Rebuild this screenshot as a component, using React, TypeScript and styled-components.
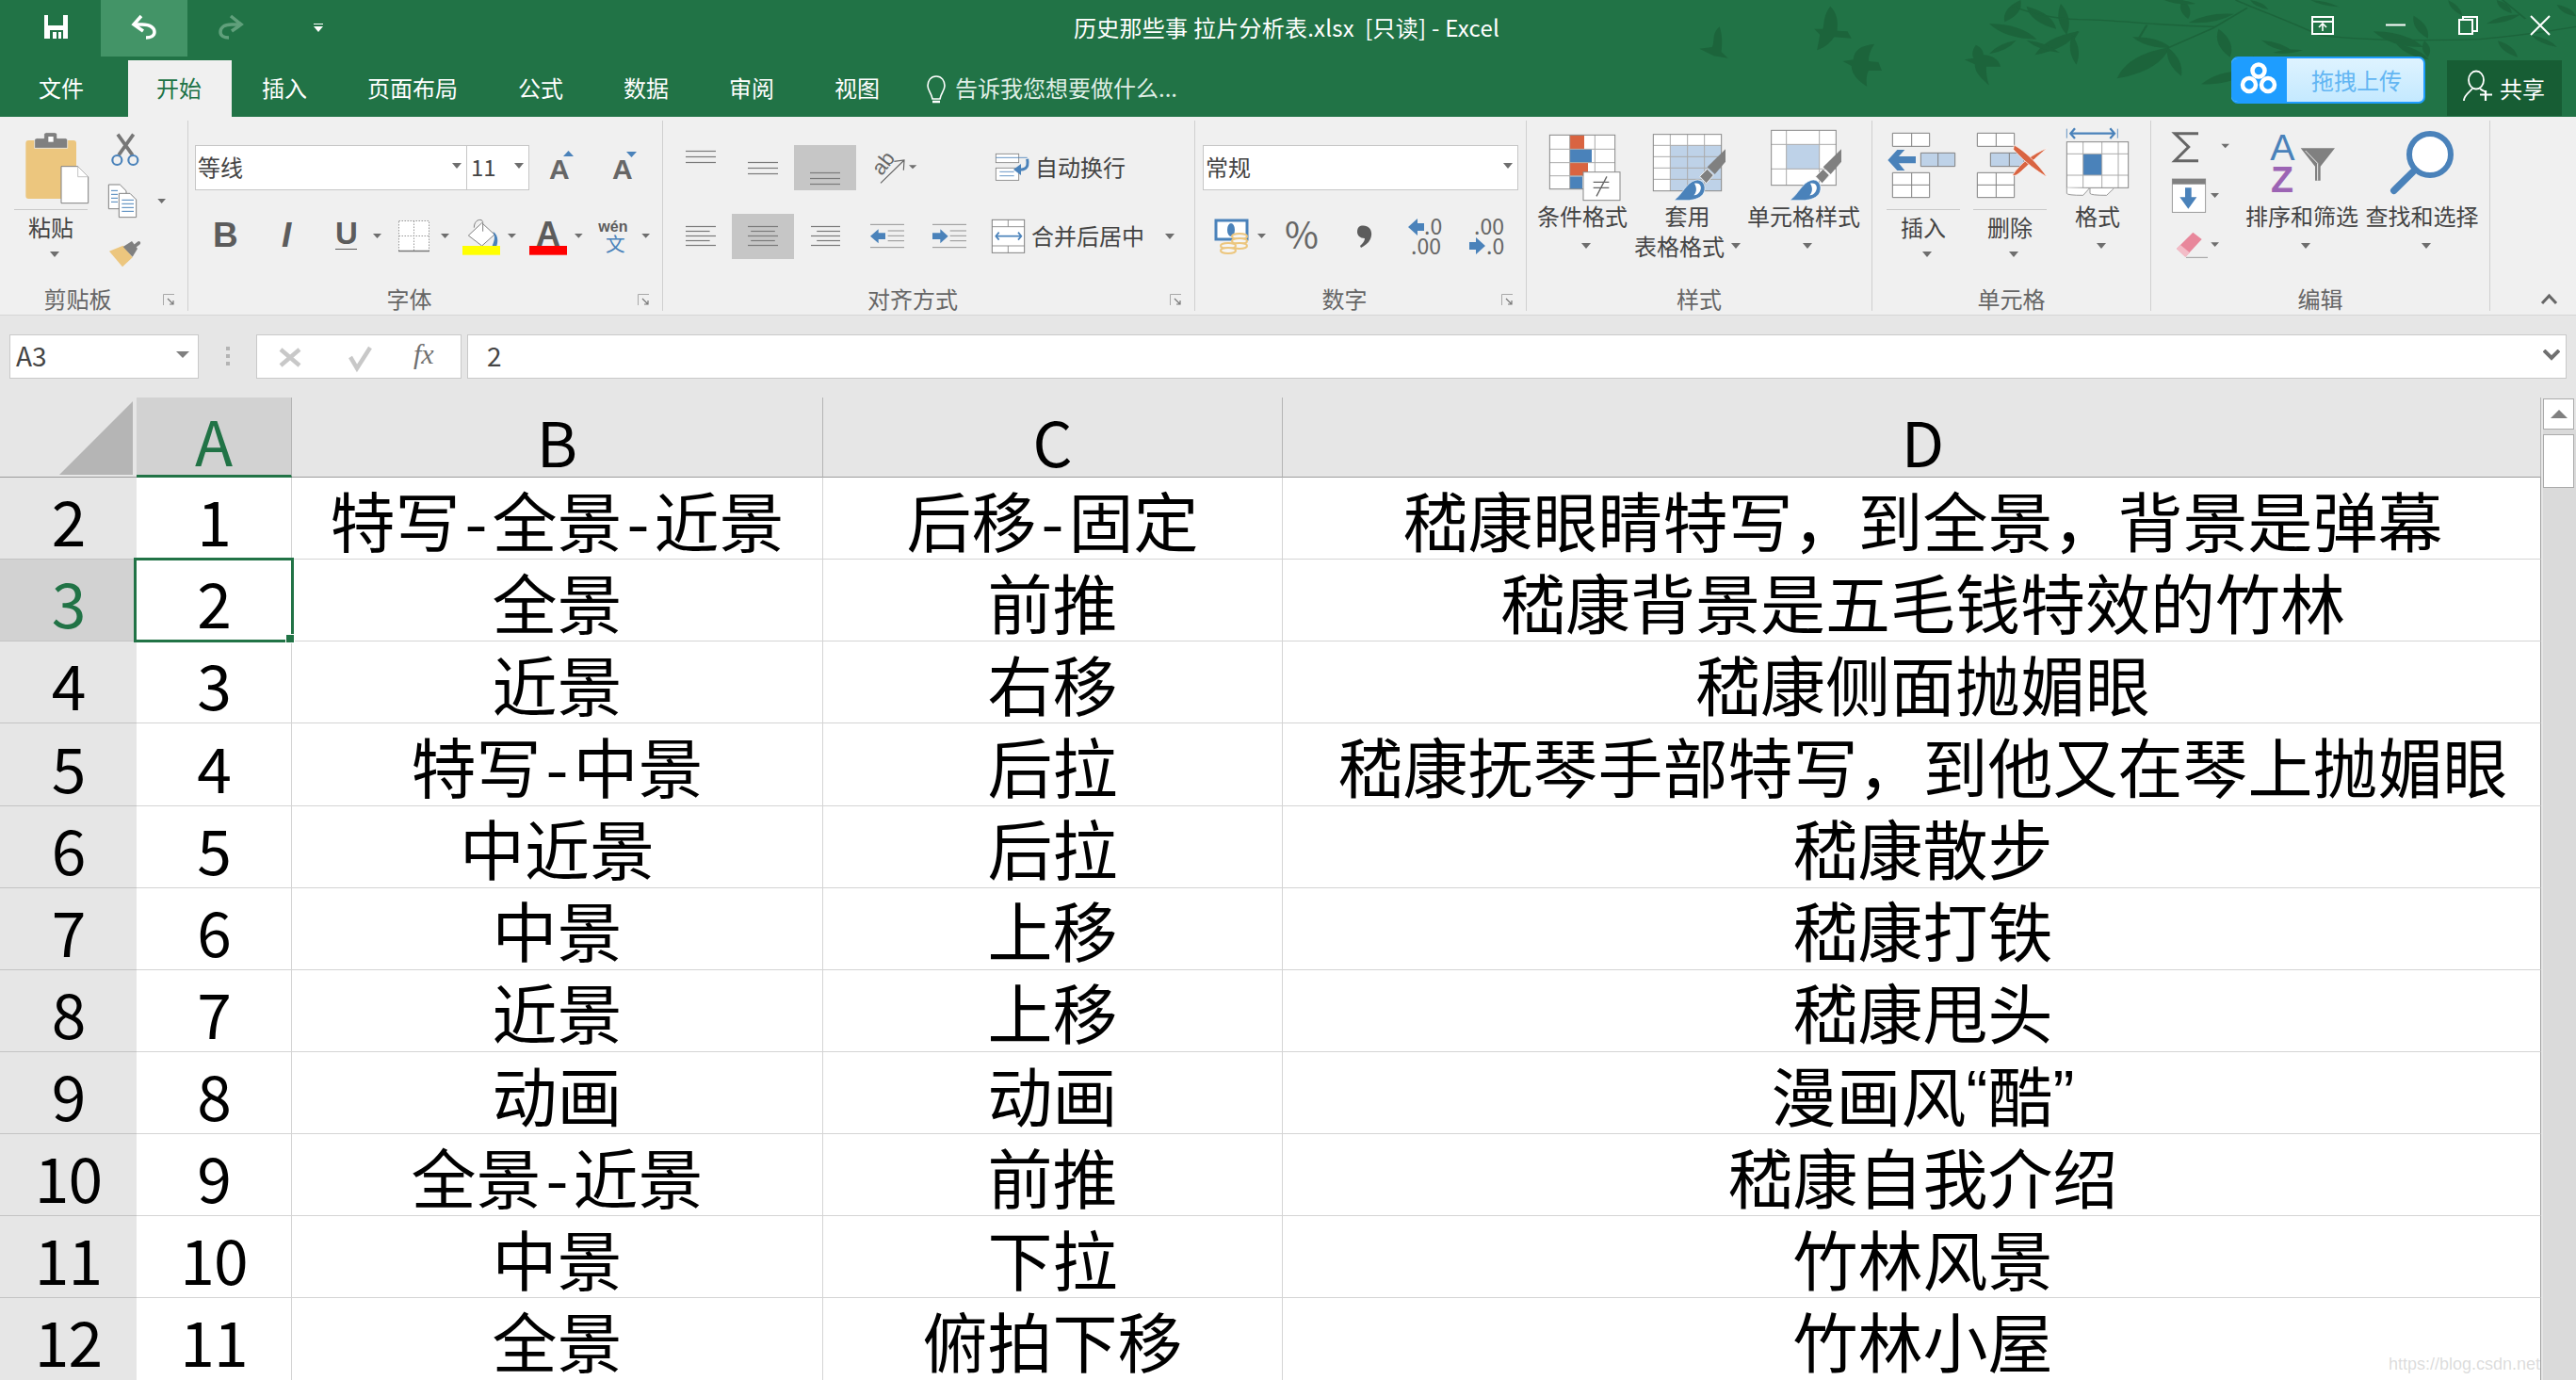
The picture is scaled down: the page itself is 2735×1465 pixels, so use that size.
import React from "react";
import styled, { createGlobalStyle } from "styled-components";

const CJK = `"Noto Sans CJK SC", "Noto Sans", sans-serif`;
const NARROW = `"Liberation Sans Narrow", "Noto Sans CJK SC", sans-serif`;
const SANS = "Liberation Sans";
const GREEN = "#217346";
const BLUE = "#4a82ba";
const TXT = "#666666";
const INNER = "#aaaaaa";
const TAN = "#ecc67e";
const RED = "#d96441";
const PALE = "#bed2e8";

const Global = createGlobalStyle`
  html, body { margin: 0; padding: 0; background: #e6e6e6; }
  * { box-sizing: border-box; }
`;

const Page = styled.div`
  width: 2735px; height: 1465px; overflow: hidden; position: relative;
  display: flex; flex-direction: column;
  font-family: ${CJK}; background: #e6e6e6;
`;
const Header = styled.header`position: relative; height: 124px; background: ${GREEN}; flex: none; display: flex; flex-direction: column;`;
const Decor = styled.svg`position: absolute; left: 1780px; top: 0; pointer-events: none;`;
const TitleBar = styled.div`position: relative; height: 64px; display: flex; flex: none;`;
const Qat = styled.div`display: flex; width: 380px; height: 60px; flex: none;`;
const QatBtn = styled.div<{ $on?: boolean }>`height: 60px; background: ${(p) => (p.$on ? "#439467" : "transparent")};`;
const DocTitle = styled.div`margin-left: 760px; line-height: 58px; font-size: 24px; color: #fff; white-space: pre; letter-spacing: 0.25px;`;
const WinCtl = styled.div`margin-left: auto; display: flex;`;
const TabRow = styled.div`position: relative; height: 60px; display: flex; flex: none; align-items: stretch;`;
const Tab = styled.div<{ $on?: boolean; $first?: boolean }>`
  padding: ${(p) => (p.$first ? "0 47px 0 41px" : p.$on ? "0 32px 0 30px" : "0 32px")};
  line-height: 58px; font-size: 24px; white-space: nowrap;
  color: ${(p) => (p.$on ? GREEN : "#fff")};
  background: ${(p) => (p.$on ? "#f0f0f0" : "transparent")};
`;
const TellMe = styled.div`display: flex; margin-left: 18px; align-items: flex-start; color: #dfeee5; font-size: 24px; line-height: 58px; white-space: nowrap;`;
const Upload = styled.div`
  margin-left: auto; margin-top: -4px; width: 206px; height: 50px; display: flex; flex: none;
  border-radius: 7px; overflow: hidden; border: 2px solid #1e9dff; border-width: 2px 2px 2px 0;
  background: linear-gradient(#def3ff, #c4e9ff);
`;
const UploadIcon = styled.div`width: 59px; background: #1e9dff; flex: none;`;
const UploadText = styled.div`padding-left: 26px; font-size: 24px; color: #63b6f3; line-height: 46px; white-space: nowrap;`;
const Share = styled.div`margin: 0 15px 1px 23px; width: 122px; background: #175d34; display: flex; color: #fff; font-size: 24px; line-height: 60px;`;

const Ribbon = styled.div`height: 211px; flex: none; display: flex; background: #f0f0f0; border-bottom: 1px solid #d6d6d6; padding-top: 4px;`;
const Group = styled.section<{ $w: number }>`
  width: ${(p) => p.$w}px; height: 202px; flex: none; border-right: 1px solid #d0d0d0;
  display: flex; flex-direction: column;
`;
const GroupBody = styled.div`flex: 1; min-height: 0;`;
const GroupLabel = styled.div<{ $launch?: boolean }>`
  position: relative; height: 26px; flex: none; text-align: center; font-size: 24px; line-height: 26px; color: ${TXT};
  padding-right: ${(p) => (p.$launch ? 34 : 0)}px;
`;
const Launcher = styled.span`position: absolute; right: 13px; top: 8px;`;
const Rows = styled.div<{ $pl: number }>`display: flex; flex-direction: column; gap: 25px; padding: 26px 0 0 ${(p) => p.$pl}px;`;
const Row = styled.div`display: flex; height: 48px; align-items: center;`;
const Combo = styled.div<{ $w: number; $joined?: boolean }>`
  width: ${(p) => p.$w}px; height: 48px; flex: none; background: #fff; border: 1.5px solid #c6c6c6;
  margin-left: ${(p) => (p.$joined ? "-1px" : "0")};
  display: flex; align-items: center; justify-content: space-between; padding: 0 5px 4px ${(p) => (p.$joined ? 4 : 2)}px;
  font-size: 24px; color: #444;
`;
const Caret = styled.i<{ $ml?: number }>`
  display: inline-block; flex: none; width: 0; height: 0; margin-left: ${(p) => p.$ml ?? 0}px;
  border-left: 5px solid transparent; border-right: 5px solid transparent; border-top: 6px solid #6e6e6e;
`;
const Pressed = styled.div`background: #c6c6c6; height: 48px;`;
const InlineText = styled.span`font-size: 24px; color: #444; white-space: nowrap; line-height: 48px; padding-bottom: 2px;`;
const BigRow = styled.div<{ $pl: number; $gap: number }>`display: flex; padding: 7px 0 0 ${(p) => p.$pl}px; gap: ${(p) => p.$gap}px;`;
const BigBtn = styled.div<{ $w: number }>`width: ${(p) => p.$w}px; flex: none; display: flex; flex-direction: column; align-items: center;`;
const BigLabel = styled.div`height: 32px; line-height: 32px; font-size: 24px; color: #444; white-space: nowrap; display: flex; align-items: center;`;
const SplitRule = styled.div`width: 100%; height: 1px; background: #c9c9c9; margin: 9px 0 2px;`;
const CaretLine = styled.div<{ $h: number }>`height: ${(p) => p.$h}px; padding-left: 8px; display: flex; align-items: center; justify-content: center;`;
const ToolColumn = styled.div<{ $w: number }>`width: ${(p) => p.$w}px; flex: none; display: flex; flex-direction: column;`;

const FormulaBand = styled.div`height: 87px; flex: none; display: flex; padding: 20px 0 20px 10px; background: #e6e6e6;`;
const NameBox = styled.div`width: 201px; height: 47px; background: #fff; border: 1.5px solid #c9c9c9; display: flex; align-items: center; justify-content: space-between; padding: 0 9px 4px 6px; font: 28px ${NARROW}; color: #444;`;
const NameCaret = styled.i`width: 0; height: 0; border-left: 7px solid transparent; border-right: 7px solid transparent; border-top: 7px solid #808080;`;
const FxBox = styled.div`width: 218px; height: 47px; background: #fff; border: 1.5px solid #c9c9c9; flex: none;`;
const FormulaInput = styled.div`width: 2229px; height: 47px; margin-left: 6px; background: #fff; border: 1.5px solid #c9c9c9; display: flex; align-items: center; justify-content: space-between; padding: 0 6px 4px 20px; font: 28px ${NARROW}; color: #444;`;

const SheetWrap = styled.div`flex: 1; min-height: 0; display: flex; position: relative;`;
const Sheet = styled.div`
  width: 2698px; flex: none; display: grid; align-content: start;
  grid-template-columns: 145px 165px 564px 488px 1336px;
  grid-template-rows: 85px;
  grid-auto-rows: 87.15px;
  font-family: ${NARROW}; font-size: 69px; color: #000;
`;
const Corner = styled.div`background: #e6e6e6; border-bottom: 1.5px solid #9c9c9c; display: flex; justify-content: flex-end; padding: 4px 4px 0 0;`;
const ColHead = styled.div<{ $on?: boolean; $wide?: boolean }>`
  display: flex; align-items: center; justify-content: center; padding: 6px 0 0 ${(p) => (p.$wide ? 24 : 0)}px;
  font-size: 66px;
  background: ${(p) => (p.$on ? "#d2d2d2" : "#e6e6e6")};
  color: ${(p) => (p.$on ? GREEN : "#000")};
  border-right: 1px solid #b4b4b4;
  border-bottom: ${(p) => (p.$on ? `3px solid ${GREEN}` : "1.5px solid #9c9c9c")};
`;
const RowHead = styled.div<{ $on?: boolean }>`
  display: flex; align-items: center; justify-content: center; padding-top: 2px; font-size: 66px; letter-spacing: -1px;
  background: ${(p) => (p.$on ? "#d2d2d2" : "#e6e6e6")};
  color: ${(p) => (p.$on ? GREEN : "#000")};
  border-bottom: 1px solid #c4c4c4;
`;
const Cell = styled.div<{ $end?: boolean; $num?: boolean }>`
  position: relative; background: #fff; display: flex; align-items: center; justify-content: center;
  padding: ${(p) => (p.$num ? "2px 0 0 0" : p.$end ? "1px 0 0 24px" : "1px 0 0 0")};
  font-size: ${(p) => (p.$num ? 66 : 69)}px;
  letter-spacing: ${(p) => (p.$num ? -1 : 0)}px;
  white-space: pre;
  border-right: 1px solid ${(p) => (p.$end ? "#a0a0a0" : "#d4d4d4")};
  border-bottom: 1px solid #d4d4d4;
`;
const Dash = styled.span`padding: 0 5px;`;
const Quote = styled.span`font-family: "Liberation Sans Narrow", sans-serif;`;
const Selection = styled.span`position: absolute; left: -3px; top: -2px; right: -3px; bottom: -2px; border: 3px solid ${GREEN}; pointer-events: none; z-index: 2;`;
const Handle = styled.span`position: absolute; right: -3px; bottom: -3px; width: 8px; height: 8px; background: ${GREEN}; outline: 1px solid #fff;`;
const ScrollBar = styled.div`flex: 1; display: flex; flex-direction: column; padding: 1px 0 0 2px;`;
const ScrollBtn = styled.div`width: 33px; height: 33px; background: #fff; border: 1px solid #ababab; display: flex; align-items: center; justify-content: center; flex: none;`;
const Track = styled.div`flex: 1; background: #dadada; padding-top: 5px;`;
const Thumb = styled.div`width: 33px; height: 57px; background: #fff; border: 1px solid #ababab;`;
const Watermark = styled.div`position: absolute; right: 38px; bottom: 6px; font: 18px "Liberation Sans", sans-serif; color: rgba(170,170,170,.42); z-index: 3;`;
const PlainSvg = styled.svg`display: block; flex: none;`;

const Glyph = styled.svg`display: block; flex: none; overflow: visible;`;
const Ico = ({ x, y, w, h, children }: { x: number; y: number; w: number; h: number; children?: React.ReactNode }) => (
  <Glyph width={w} height={h} viewBox={`${x} ${y} ${w} ${h}`}>{children}</Glyph>
);
const Z = ({ x, y, children }: { x: number; y: number; children: React.ReactNode }) => (
  <g transform={`translate(${x} ${y}) scale(${1 / 3})`}>{children}</g>
);
const Tri = ({ x, y }: { x: number; y: number }) => (
  <polygon points={`${x},${y} ${x + 9},${y} ${x + 4.5},${y + 5}`} fill="#6e6e6e" />
);
const Launch = () => (
  <Launcher>
    <PlainSvg width="13" height="13" viewBox="0 0 13 13">
      <path d="M.5 12V.5H12" fill="none" stroke="#a8a8a8" />
      <path d="M5 5l6 6M11 7v4H7" fill="none" stroke="#777" strokeWidth="1.2" />
    </PlainSvg>
  </Launcher>
);

const Brush = ({ dx = 0 }: { dx?: number }) => (
  <g transform={`translate(${dx} 0)`}>
    <polygon points="606,85 606,125 572,165 548,142" fill="#808080" />
    <polygon points="548,148 568,168 545,194 524,172" fill="#808080" stroke="#f0f0f0" strokeWidth="3" />
    <path d="M442 248C470 228 480 192 510 184C532 178 546 200 538 222C530 242 505 246 490 248Z" fill={BLUE} stroke="#fff" strokeWidth="2" />
    <path d="M507 194C522 190 532 202 526 216C521 228 512 232 505 232C516 220 514 206 507 194Z" fill="#fff" />
  </g>
);
const DoubleArrow = ({ x1, x2, y, s = 3 }: { x1: number; x2: number; y: number; s?: number }) => (
  <g stroke={BLUE} strokeWidth={s * 1.7} fill="none">
    <path d={`M${x1 + 3} ${y}H${x2 - 3}`} />
    <path d={`M${x1 + 4 * s} ${y - 4 * s}L${x1 + 2} ${y}L${x1 + 4 * s} ${y + 4 * s}M${x2 - 4 * s} ${y - 4 * s}L${x2 - 2} ${y}L${x2 - 4 * s} ${y + 4 * s}`} />
  </g>
);
const Lines = ({ x1, x2, ys, short }: { x1: number; x2: number; ys: number[]; short?: "l" | "c" | "r" }) => (
  <g stroke="#7a7a7a" strokeWidth="1.2">
    {ys.map((y, i) => {
      const odd = short && i % 2 === 1;
      const d = x2 - x1;
      const a = odd ? (short === "r" ? x1 + d * 0.2 : short === "c" ? x1 + d * 0.1 : x1) : x1;
      const b = odd ? (short === "l" ? x1 + d * 0.8 : short === "c" ? x2 - d * 0.1 : x2) : x2;
      return <line key={y} x1={a} x2={b} y1={y + 0.5} y2={y + 0.5} />;
    })}
  </g>
);

const leaves: number[][] = [
  [600, 0, 572, 70, 26], [610, 20, 662, 92, 30], [670, 12, 680, 110, 22], [545, 75, 628, 125, 34], [592, 128, 545, 172, 18], [700, 100, 625, 175, 34], [610, 128, 668, 168, 18],
  [690, 112, 697, 206, 18], [795, 118, 862, 152, 28], [860, 150, 768, 250, 48], [856, 150, 880, 242, 22], [893, 72, 972, 44, 26], [945, 92, 965, 182, 26], [882, 0, 892, 60, 20], [850, 0, 905, 12, 16],
  [1000, 0, 1032, 30, 14], [1215, 100, 1302, 150, 36], [1285, 50, 1310, 122, 22], [1255, 140, 1312, 190, 22], [1304, 130, 1310, 182, 16], [1020, 128, 1076, 166, 20], [1040, 168, 1092, 160, 14],
  [1432, 130, 1466, 182, 20], [1412, 76, 1472, 46, 20], [1535, 15, 1568, 52, 18], [1430, 0, 1456, 42, 18], [915, 268, 1000, 225, 34], [1005, 178, 1020, 232, 14], [1105, 0, 1155, 22, 12], [1345, 0, 1370, 50, 14], [1490, 112, 1535, 150, 16],
];
const leafPath = ([a, b, c, d, w]: number[]) => {
  const mx = (a + c) / 2, my = (b + d) / 2, l = Math.hypot(c - a, d - b) || 1;
  const nx = (-(d - b) / l) * (w / 2), ny = ((c - a) / l) * (w / 2);
  return `M${a} ${b}Q${mx + nx * 1.6} ${my + ny * 1.6} ${c} ${d}Q${mx - nx * 1.6} ${my - ny * 1.6} ${a} ${b}Z`;
};

const rows: [number, string, string, string][] = [
  [1, "特写-全景-近景", "后移-固定", "嵇康眼睛特写，到全景，背景是弹幕"],
  [2, "全景", "前推", "嵇康背景是五毛钱特效的竹林"],
  [3, "近景", "右移", "嵇康侧面抛媚眼"],
  [4, "特写-中景", "后拉", "嵇康抚琴手部特写，到他又在琴上抛媚眼"],
  [5, "中近景", "后拉", "嵇康散步"],
  [6, "中景", "上移", "嵇康打铁"],
  [7, "近景", "上移", "嵇康甩头"],
  [8, "动画", "动画", "漫画风“酷”"],
  [9, "全景-近景", "前推", "嵇康自我介绍"],
  [10, "中景", "下拉", "竹林风景"],
  [11, "全景", "俯拍下移", "竹林小屋"],
];

const Rich = ({ text }: { text: string }) => (
  <>
    {text.split(/([-“”])/).map((part, i) =>
      part === "-" ? <Dash key={i}>-</Dash> : part === "“" || part === "”" ? <Quote key={i}>{part}</Quote> : part
    )}
  </>
);

export default function App() {
  return (
    <Page>
      <Global />
      <Header>
        <Decor width="955" height="124" viewBox="0 0 955 124">
          <g transform="scale(0.609 0.3333)" fill="#1c643b">
            <path d="M75 85C60 110 68 130 62 150L40 155L65 178L90 185L78 165C80 140 80 110 75 85Z" />
            <path d="M268 20C255 50 258 80 255 92L240 92L250 110L245 160C262 150 270 130 275 118L305 122L298 100L280 98C282 70 280 40 268 20Z" />
            <path d="M345 140C320 145 310 160 308 190L290 195L305 210C305 240 320 262 332 275C330 250 332 235 335 225L358 225L352 198L335 195C335 170 340 155 345 140Z" />
            <path d="M522 143C515 160 515 175 518 185L502 190L520 205C520 235 535 255 545 272C540 245 540 225 540 212L565 212C562 190 550 175 535 175C535 160 530 150 522 143Z" />
            {leaves.map((l) => <path key={l.join()} d={leafPath(l)} />)}
            <g fill="none" stroke="#1c643b" strokeWidth="4">
              <path d="M585 18C610 40 660 60 700 62C760 62 860 85 940 85" />
              <path d="M975 0C1010 30 1060 60 1120 112C1200 130 1300 130 1400 125C1460 115 1520 100 1568 85" />
              <path d="M995 25L935 90L860 150M820 80L805 125M700 100L690 130M1440 0L1480 60" />
            </g>
          </g>
        </Decor>
        <TitleBar>
          <Qat>
            <QatBtn>
              <Ico x={0} y={0} w={107} h={60}>
                <path d="M47 16H72V41H47Z" fill="#fff" />
                <path d="M51 16H67V27H51Z" fill={GREEN} />
                <path d="M53 32H67V41H53Z" fill={GREEN} />
                <path d="M56 34H60V41H56ZM62 34H65V41H62Z" fill="#fff" />
              </Ico>
            </QatBtn>
            <QatBtn $on>
              <Ico x={107} y={0} w={92} h={60}>
                <path d="M150 17L142 26L152 33" fill="none" stroke="#fff" strokeWidth="3.5" />
                <path d="M143 26H151C160 26 164 30 164 34C164 38 160 40 155 40" fill="none" stroke="#fff" strokeWidth="3.5" />
              </Ico>
            </QatBtn>
            <QatBtn>
              <Ico x={199} y={0} w={91} h={60}>
                <g opacity="0.4" stroke="#bfe3cc" fill="none" strokeWidth="3.5">
                  <path d="M245 17L256 26L246 33" />
                  <path d="M256 26H246C237 26 234 30 234 34C234 38 238 40 243 40" />
                </g>
              </Ico>
            </QatBtn>
            <QatBtn>
              <Ico x={290} y={0} w={90} h={60}>
                <path d="M333 25H343V26H333ZM333 28H343L338 34Z" fill="#fff" />
              </Ico>
            </QatBtn>
          </Qat>
          <DocTitle>历史那些事 拉片分析表.xlsx  [只读] - Excel</DocTitle>
          <WinCtl>
            <Ico x={2420} y={0} w={80} h={60}>
              <g fill="none" stroke="#fff" strokeWidth="2">
                <path d="M2455 18H2477V36H2455ZM2455 23H2477" />
                <path d="M2466 33V26M2462 29L2466 25L2470 29" strokeWidth="1.6" />
              </g>
            </Ico>
            <Ico x={2500} y={0} w={90} h={60}>
              <path d="M2533 26.5H2554" stroke="#fff" strokeWidth="2" />
            </Ico>
            <Ico x={2590} y={0} w={60} h={60}>
              <g fill="none" stroke="#fff" strokeWidth="2">
                <path d="M2611 21H2625V36H2611Z" />
                <path d="M2615 21V18H2630V33H2625" />
              </g>
            </Ico>
            <Ico x={2650} y={0} w={85} h={60}>
              <path d="M2687 17L2707 37M2707 17L2687 37" stroke="#fff" strokeWidth="2" />
            </Ico>
          </WinCtl>
        </TitleBar>
        <TabRow>
          <Tab $first>文件</Tab>
          <Tab $on>开始</Tab>
          <Tab>插入</Tab>
          <Tab>页面布局</Tab>
          <Tab>公式</Tab>
          <Tab>数据</Tab>
          <Tab>审阅</Tab>
          <Tab>视图</Tab>
          <TellMe>
            <Ico x={985} y={64} w={30} h={60}>
              <path d="M995 81C989 81 986 86 986 91C986 96 990 99 991 105H999C1000 99 1004 96 1004 91C1004 86 1001 81 995 81Z" fill="none" stroke="#fff" strokeWidth="1.6" />
              <path d="M991 108H999" stroke="#fff" strokeWidth="2.5" />
            </Ico>
            告诉我您想要做什么...
          </TellMe>
          <Upload>
            <UploadIcon>
              <Ico x={2369} y={62} w={59} h={46}>
                <g fill="none" stroke="#fff" strokeWidth="4.5">
                  <circle cx="2398" cy="75" r="6.5" />
                  <circle cx="2388" cy="90" r="7" />
                  <circle cx="2408" cy="90" r="7" />
                </g>
              </Ico>
            </UploadIcon>
            <UploadText>拖拽上传</UploadText>
          </Upload>
          <Share>
            <Ico x={2598} y={64} w={56} h={59}>
              <g fill="none" stroke="#fff" strokeWidth="1.8">
                <ellipse cx="2629" cy="85" rx="8" ry="9.5" />
                <path d="M2625 94C2622 98 2617 100 2616 106V107M2633 94C2635 96 2638 97 2640 98" />
                <path d="M2639 96V107M2633 100.5H2646" strokeWidth="2.2" />
              </g>
            </Ico>
            共享
          </Share>
        </TabRow>
      </Header>

      <Ribbon>
        <Group $w={200}>
          <GroupBody>
            <BigRow $pl={15} $gap={0}>
              <BigBtn $w={78}>
                <Ico x={15} y={135} w={78} h={78}>
                  <Z x={10} y={130}>
                    <rect x="52" y="57" width="161" height="186" rx="9" fill={TAN} />
                    <path d="M80 82V56Q80 50 88 50H110V38Q110 32 118 32H144Q152 32 152 38V50H178Q185 50 185 56V82Z" fill="#808080" stroke="#fff" strokeWidth="2" />
                    <rect x="124" y="45" width="16" height="17" fill="#fff" />
                    <path d="M165 140H218L251 173V257H165Z" fill="#fff" stroke="#808080" strokeWidth="3" />
                    <path d="M218 140V173H251" fill="#fff" stroke="#a8a8a8" strokeWidth="2" />
                  </Z>
                </Ico>
                <SplitRule />
                <BigLabel>粘贴</BigLabel>
                <CaretLine $h={26}><Caret /></CaretLine>
              </BigBtn>
              <ToolColumn $w={107}>
                <Ico x={93} y={135} w={107} h={55}>
                  <Z x={10} y={130}>
                    <path d="M345 38L392 104M395 38L348 104" stroke="#777" strokeWidth="11" fill="none" />
                    <circle cx="343" cy="120" r="15" fill="none" stroke={BLUE} strokeWidth="6.5" />
                    <circle cx="394" cy="120" r="15" fill="none" stroke={BLUE} strokeWidth="6.5" />
                  </Z>
                </Ico>
                <Ico x={93} y={190} w={107} h={60}>
                  <Z x={10} y={130}>
                    <path d="M316 198H352L372 218V275H316Z" fill="#fff" stroke="#808080" strokeWidth="3" />
                    <path d="M324 217H345M324 229H345M324 241H345M324 253H345" stroke={BLUE} strokeWidth="3" />
                    <path d="M349 226H384L404 246V302H349Z" fill="#fff" stroke="#808080" strokeWidth="3" />
                    <path d="M358 247H396M358 259H396M358 271H396M358 283H396" stroke={BLUE} strokeWidth="3" />
                    <polygon points="472,243 498,243 485,258" fill="#6e6e6e" />
                  </Z>
                </Ico>
                <Ico x={93} y={250} w={107} h={40}>
                  <Z x={10} y={130}>
                    <polygon points="318,410 362,392 392,430 360,460" fill={TAN} />
                    <polygon points="362,396 390,378 408,402 392,428" fill="#808080" />
                    <path d="M398 395L412 384" stroke="#808080" strokeWidth="11" strokeLinecap="round" />
                  </Z>
                </Ico>
              </ToolColumn>
            </BigRow>
          </GroupBody>
          <GroupLabel $launch>剪贴板<Launch /></GroupLabel>
        </Group>

        <Group $w={504}>
          <GroupBody>
            <Rows $pl={7}>
              <Row>
                <Combo $w={289}>等线<Caret /></Combo>
                <Combo $w={67} $joined>11<Caret /></Combo>
                <Ico x={562} y={154} w={73} h={48}>
                  <text x="583" y="190" fontFamily={SANS} fontWeight="700" fontSize="30" fill={TXT}>A</text>
                  <polygon points="598,166 609,166 603.5,160" fill={BLUE} />
                </Ico>
                <Ico x={635} y={154} w={55} h={48}>
                  <text x="650" y="190" fontFamily={SANS} fontWeight="700" fontSize="30" fill={TXT}>A</text>
                  <polygon points="665,161 676,161 670.5,167" fill={BLUE} />
                </Ico>
              </Row>
              <Row>
                <Ico x={207} y={227} w={68} h={48}>
                  <text x="226" y="262" fontFamily={SANS} fontWeight="700" fontSize="37" fill="#5c5c5c">B</text>
                </Ico>
                <Ico x={275} y={227} w={65} h={48}>
                  <text x="299" y="262" fontFamily={SANS} fontStyle="italic" fontWeight="700" fontSize="37" fill="#5c5c5c">I</text>
                </Ico>
                <Ico x={340} y={227} w={75} h={48}>
                  <text x="356" y="259" fontFamily={SANS} fontWeight="700" fontSize="33" fill="#5c5c5c">U</text>
                  <path d="M356 264.5H379" stroke="#5c5c5c" />
                  <Tri x={396} y={248} />
                </Ico>
                <Ico x={415} y={227} w={70} h={48}>
                  <path d="M423.5 234.5H455.5V266.5H423.5ZM439.5 234.5V266.5M423.5 250.5H455.5" fill="#fff" stroke="#999" strokeDasharray="1.5 1.5" />
                  <path d="M423 266.5H456" stroke="#777" strokeWidth="1.5" />
                  <Tri x={468} y={248} />
                </Ico>
                <Ico x={485} y={227} w={70} h={48}>
                  <Z x={480} y={225}>
                    <polygon points="52,75 95,35 135,72 95,108" fill="#fff" stroke="#808080" strokeWidth="3" />
                    <path d="M70 50C70 20 100 20 98 35V62" fill="none" stroke="#808080" strokeWidth="3" />
                    <path d="M130 62C145 70 148 90 142 108H128C135 90 138 80 130 62Z" fill={BLUE} />
                    <rect x="33" y="108" width="120" height="29" fill="#ffff00" />
                    <polygon points="177,69 204,69 190,83" fill="#6e6e6e" />
                  </Z>
                </Ico>
                <Ico x={555} y={227} w={70} h={48}>
                  <Z x={480} y={225}>
                    <text x="267" y="108" fontFamily={SANS} fontWeight="700" fontSize="108" fill="#5c5c5c">A</text>
                    <rect x="246" y="108" width="120" height="29" fill="#ff0000" />
                    <polygon points="390,69 416,69 403,83" fill="#6e6e6e" />
                  </Z>
                </Ico>
                <Ico x={625} y={227} w={70} h={48}>
                  <Z x={480} y={225}>
                    <text x="466" y="63" fontFamily={SANS} fontWeight="700" fontSize="48" fill="#5c5c5c">wén</text>
                    <text x="489" y="126" fontFamily={CJK} fontSize="62" fill={BLUE}>文</text>
                    <polygon points="604,69 630,69 617,83" fill="#6e6e6e" />
                  </Z>
                </Ico>
              </Row>
            </Rows>
          </GroupBody>
          <GroupLabel $launch>字体<Launch /></GroupLabel>
        </Group>

        <Group $w={565}>
          <GroupBody>
            <Rows $pl={0}>
              <Row>
                <Ico x={704} y={154} w={73} h={48}><Lines x1={728} x2={760} ys={[160, 166, 172]} /></Ico>
                <Ico x={777} y={154} w={66} h={48}><Lines x1={794} x2={826} ys={[172, 178, 184]} /></Ico>
                <Pressed><Ico x={843} y={154} w={66} h={48}><Lines x1={860} x2={892} ys={[183, 189, 195]} /></Ico></Pressed>
                <Ico x={909} y={154} w={148} h={48}>
                  <Z x={900} y={150}>
                    <text transform="translate(108 112) rotate(-52)" fontFamily={SANS} fontSize="66" fill="#666">ab</text>
                    <path d="M105 133L180 60M148 64L180 60L178 92" fill="none" stroke="#666" strokeWidth="3.5" />
                    <polygon points="195,76 220,76 207,88" fill="#6e6e6e" />
                    <rect x="472" y="40" width="73" height="28" fill="#fff" stroke="#808080" strokeWidth="2.5" />
                    <rect x="472" y="85" width="73" height="39" fill="#fff" stroke="#808080" strokeWidth="2.5" />
                    <path d="M472 52H572M484 97H530M484 110H530" stroke={BLUE} strokeWidth="2.5" />
                    <path d="M572 56C578 90 560 92 540 90" fill="none" stroke={BLUE} strokeWidth="9" />
                    <polygon points="528,90 552,72 552,108" fill={BLUE} />
                  </Z>
                </Ico>
                <Ico x={1057} y={154} w={42} h={48} />
                <InlineText>自动换行</InlineText>
              </Row>
              <Row>
                <Ico x={704} y={227} w={73} h={48}><Lines x1={728} x2={760} ys={[240, 245, 250, 255, 260]} short="l" /></Ico>
                <Pressed><Ico x={777} y={227} w={66} h={48}><Lines x1={794} x2={826} ys={[240, 245, 250, 255, 260]} short="c" /></Ico></Pressed>
                <Ico x={843} y={227} w={72} h={48}><Lines x1={861} x2={892} ys={[240, 245, 250, 255, 260]} short="r" /></Ico>
                <Ico x={915} y={227} w={65} h={48}>
                  <Z x={900} y={150}>
                    <path d="M72 265H180M72 338H180M128 285H180M128 301H180M128 317H180" stroke="#808080" strokeWidth="2.5" />
                    <polygon points="72,302 98,280 98,292 120,292 120,312 98,312 98,325" fill={BLUE} />
                  </Z>
                </Ico>
                <Ico x={980} y={227} w={70} h={48}>
                  <Z x={900} y={150}>
                    <path d="M270 265H378M270 338H378M326 285H378M326 301H378M326 317H378" stroke="#808080" strokeWidth="2.5" />
                    <polygon points="270,292 295,292 295,280 320,302 295,325 295,312 270,312" fill={BLUE} />
                  </Z>
                </Ico>
                <Ico x={1050} y={227} w={45} h={48}>
                  <Z x={900} y={150}>
                    <rect x="460" y="250" width="103" height="105" fill="#fff" stroke="#808080" strokeWidth="3" />
                    <path d="M460 272H563M460 333H563M511 250V272M511 333V355" stroke="#808080" strokeWidth="2.5" />
                    <DoubleArrow x1={470} x2={555} y={302} s={3} />
                  </Z>
                </Ico>
                <InlineText>合并后居中</InlineText>
                <Caret $ml={22} />
              </Row>
            </Rows>
          </GroupBody>
          <GroupLabel $launch>对齐方式<Launch /></GroupLabel>
        </Group>

        <Group $w={352}>
          <GroupBody>
            <Rows $pl={8}>
              <Row><Combo $w={335}>常规<Caret /></Combo></Row>
              <Row>
                <Ico x={1277} y={227} w={73} h={48}>
                  <rect x="1291" y="234" width="33" height="20" fill="#fff" stroke={BLUE} strokeWidth="3" />
                  <ellipse cx="1307" cy="244" rx="4" ry="7" fill={BLUE} />
                  <g fill="#f5f5f5" stroke={TAN} strokeWidth="2">
                    <ellipse cx="1316" cy="251" rx="8" ry="3" />
                    <ellipse cx="1316" cy="256" rx="8" ry="3" />
                    <ellipse cx="1316" cy="261" rx="8" ry="3" />
                    <ellipse cx="1304" cy="261" rx="8" ry="3" />
                    <ellipse cx="1304" cy="266" rx="8" ry="3" />
                  </g>
                  <Tri x={1335} y={248} />
                </Ico>
                <Ico x={1350} y={227} w={70} h={48}>
                  <text x="1364" y="264" fontFamily={NARROW} fontSize="39" fill="#666">%</text>
                </Ico>
                <Ico x={1420} y={227} w={60} h={48}>
                  <path d="M1444 240C1452 238 1457 243 1456 250C1455 257 1450 260 1445 263L1444 261C1447 258 1449 256 1449 253C1444 253 1441 250 1441 246C1441 243 1442 241 1444 240Z" fill="#5c5c5c" />
                </Ico>
                <Ico x={1480} y={227} w={65} h={48}>
                  <polygon points="1495,241 1505,232 1505,237 1512,237 1512,245 1505,245 1505,250" fill={BLUE} />
                  <text x="1512" y="249" fontFamily={NARROW} fontSize="23" fill="#666">.0</text>
                  <text x="1498" y="270" fontFamily={NARROW} fontSize="23" fill="#666">.00</text>
                </Ico>
                <Ico x={1545} y={227} w={65} h={48}>
                  <text x="1565" y="249" fontFamily={NARROW} fontSize="23" fill="#666">.00</text>
                  <polygon points="1577,261 1567,252 1567,257 1560,257 1560,265 1567,265 1567,270" fill={BLUE} />
                  <text x="1578" y="270" fontFamily={NARROW} fontSize="23" fill="#666">.0</text>
                </Ico>
              </Row>
            </Rows>
          </GroupBody>
          <GroupLabel $launch>数字<Launch /></GroupLabel>
        </Group>

        <Group $w={367}>
          <GroupBody>
            <BigRow $pl={11} $gap={7}>
              <BigBtn $w={96}>
                <Ico x={1632} y={135} w={96} h={78}>
                  <Z x={1630} y={130}>
                    <rect x="46" y="40" width="208" height="172" fill="#fff" />
                    <rect x="110" y="40" width="46" height="45" fill={RED} />
                    <rect x="110" y="85" width="70" height="43" fill={BLUE} />
                    <rect x="110" y="128" width="58" height="43" fill={RED} />
                    <rect x="110" y="172" width="40" height="40" fill={BLUE} />
                    <path d="M110 40V212M190 40V212M46 85H254M46 128H254M46 170H254" stroke={INNER} strokeWidth="3" />
                    <rect x="46" y="40" width="208" height="172" fill="none" stroke="#888" strokeWidth="3" />
                    <rect x="153" y="158" width="117" height="90" fill="#fff" stroke="#888" strokeWidth="3" />
                    <path d="M185 190H235M185 208H235M228 172L195 235" stroke="#666" strokeWidth="4" />
                  </Z>
                </Ico>
                <BigLabel>条件格式</BigLabel>
                <CaretLine $h={32}><Caret /></CaretLine>
              </BigBtn>
              <BigBtn $w={113}>
                <Ico x={1735} y={135} w={113} h={78}>
                  <Z x={1630} y={130}>
                    <rect x="376" y="38" width="217" height="180" fill="#fff" />
                    <rect x="430" y="73" width="163" height="145" fill={PALE} />
                    <path d="M430 38V218M485 38V218M539 38V218M376 73H593M376 109H593M376 145H593M376 181H593" stroke={INNER} strokeWidth="3" />
                    <rect x="376" y="38" width="217" height="180" fill="none" stroke="#888" strokeWidth="3" />
                    <Brush />
                  </Z>
                </Ico>
                <BigLabel>套用</BigLabel>
                <BigLabel>表格格式<Caret $ml={7} /></BigLabel>
              </BigBtn>
              <BigBtn $w={120}>
                <Ico x={1855} y={135} w={120} h={78}>
                  <Z x={1630} y={130}>
                    <rect x="752" y="25" width="206" height="175" fill="#fff" />
                    <rect x="800" y="70" width="105" height="78" fill={PALE} />
                    <path d="M800 25V200M905 25V200M752 70H958M752 148H958" stroke={INNER} strokeWidth="3" />
                    <rect x="752" y="25" width="206" height="175" fill="none" stroke="#888" strokeWidth="3" />
                    <Brush dx={369} />
                  </Z>
                </Ico>
                <BigLabel>单元格样式</BigLabel>
                <CaretLine $h={32}><Caret /></CaretLine>
              </BigBtn>
            </BigRow>
          </GroupBody>
          <GroupLabel>样式</GroupLabel>
        </Group>

        <Group $w={296}>
          <GroupBody>
            <BigRow $pl={15} $gap={14}>
              <BigBtn $w={78}>
                <Ico x={2003} y={135} w={78} h={78}>
                  <Z x={1995} y={130}>
                    <g fill="#fff" stroke="#808080" strokeWidth="3">
                      <path d="M43 34H161V76H43ZM104 34V76" />
                      <path d="M133 97H242V140H133ZM188 97V140" fill={PALE} />
                      <path d="M43 160H161V239H43ZM104 160V239M43 199H161" />
                    </g>
                    <polygon points="28,120 58,87 82,87 63,108 117,108 117,130 63,130 82,153 58,153" fill={BLUE} />
                  </Z>
                </Ico>
                <SplitRule />
                <BigLabel>插入</BigLabel>
                <CaretLine $h={26}><Caret /></CaretLine>
              </BigBtn>
              <BigBtn $w={78}>
                <Ico x={2095} y={135} w={78} h={78}>
                  <Z x={1995} y={130}>
                    <g fill="#fff" stroke="#808080" strokeWidth="3">
                      <path d="M313 34H431V76H313ZM373 34V76" />
                      <path d="M355 97H462V140H355ZM415 97V140" fill={PALE} />
                      <path d="M313 160H431V239H313ZM373 160V239M313 199H431" />
                    </g>
                    <g fill={RED} stroke="#fff" strokeWidth="2">
                      <path d="M535 82C490 100 450 130 425 168C440 176 455 150 535 82Z" />
                      <path d="M430 72C462 88 510 135 535 174C500 152 470 132 428 86Z" />
                    </g>
                  </Z>
                </Ico>
                <SplitRule />
                <BigLabel>删除</BigLabel>
                <CaretLine $h={26}><Caret /></CaretLine>
              </BigBtn>
              <BigBtn $w={80}>
                <Ico x={2187} y={135} w={80} h={78}>
                  <Z x={1995} y={130}>
                    <path d="M598 20V50M760 20V50" stroke={BLUE} strokeWidth="2.5" />
                    <DoubleArrow x1={608} x2={752} y={35} s={4} />
                    <rect x="598" y="62" width="196" height="146" fill="#fff" />
                    <rect x="650" y="100" width="60" height="68" fill={BLUE} />
                    <path d="M650 62V208M710 62V208M762 62V208M598 100H794M598 168H794" stroke={INNER} strokeWidth="3" />
                    <rect x="598" y="62" width="196" height="146" fill="none" stroke="#888" strokeWidth="3" />
                    <path d="M598 208V226Q600 232 650 232L670 210M672 210V226Q674 232 725 232L748 210" fill="#fff" stroke="#999" strokeWidth="3" />
                  </Z>
                </Ico>
                <BigLabel>格式</BigLabel>
                <CaretLine $h={32}><Caret /></CaretLine>
              </BigBtn>
            </BigRow>
          </GroupBody>
          <GroupLabel>单元格</GroupLabel>
        </Group>

        <Group $w={360}>
          <GroupBody>
            <BigRow $pl={0} $gap={7}>
              <ToolColumn $w={93}>
                <Ico x={2284} y={135} w={93} h={50}>
                  <Z x={2295} y={130}>
                    <path d="M117 35H42L86 78L42 122H117" fill="none" stroke="#666" strokeWidth="9" />
                    <polygon points="190,68 216,68 203,82" fill="#6e6e6e" />
                  </Z>
                </Ico>
                <Ico x={2284} y={185} w={93} h={55}>
                  <Z x={2295} y={130}>
                    <rect x="34" y="180" width="106" height="106" fill="#fff" stroke="#888" strokeWidth="2.5" />
                    <rect x="34" y="180" width="106" height="17" fill="#808080" />
                    <polygon points="75,208 95,208 95,238 112,238 85,275 58,238 75,238" fill={BLUE} />
                    <polygon points="156,225 183,225 170,240" fill="#6e6e6e" />
                  </Z>
                </Ico>
                <Ico x={2284} y={240} w={93} h={50}>
                  <Z x={2295} y={130}>
                    <polygon points="48,402 100,350 128,372 76,428" fill="#e8879b" />
                    <polygon points="48,402 60,390 90,415 76,428" fill="#f3bcc7" />
                    <path d="M78 430H147" stroke="#888" strokeWidth="2.5" />
                    <polygon points="157,382 183,382 170,396" fill="#6e6e6e" />
                  </Z>
                </Ico>
              </ToolColumn>
              <BigBtn $w={120}>
                <Ico x={2384} y={135} w={120} h={78}>
                  <Z x={2295} y={130}>
                    <text x="346" y="120" fontFamily={SANS} fontSize="118" fill={BLUE}>A</text>
                    <text x="348" y="222" fontFamily={SANS} fontWeight="700" fontSize="118" fill="#9c64b4">Z</text>
                    <polygon points="443,82 552,82 506,140 506,185 489,185 489,140" fill="#808080" />
                    <path d="M458 90L497 130V185" fill="none" stroke="#f0f0f0" strokeWidth="3" />
                  </Z>
                </Ico>
                <BigLabel>排序和筛选</BigLabel>
                <CaretLine $h={32}><Caret /></CaretLine>
              </BigBtn>
              <BigBtn $w={121}>
                <Ico x={2511} y={135} w={121} h={78}>
                  <Z x={2295} y={130}>
                    <circle cx="855" cy="102" r="66" fill="#fff" stroke={BLUE} strokeWidth="18" />
                    <path d="M800 158L740 217" stroke={BLUE} strokeWidth="22" strokeLinecap="round" />
                  </Z>
                </Ico>
                <BigLabel>查找和选择</BigLabel>
                <CaretLine $h={32}><Caret /></CaretLine>
              </BigBtn>
            </BigRow>
          </GroupBody>
          <GroupLabel>编辑</GroupLabel>
        </Group>

        <ToolColumn $w={91}>
          <Ico x={2644} y={128} w={91} h={202}>
            <path d="M2699 322L2706.5 314L2714 322" fill="none" stroke="#666" strokeWidth="3" />
          </Ico>
        </ToolColumn>
      </Ribbon>

      <FormulaBand>
        <NameBox>A3<NameCaret /></NameBox>
        <Ico x={211} y={355} w={61} h={47}>
          <path d="M242 368V388" stroke="#b4b4b4" strokeWidth="4" strokeDasharray="4 4" />
        </Ico>
        <FxBox>
          <Ico x={273} y={356} w={215} h={44}>
            <path d="M298 371L318 388M318 371L298 388" stroke="#c8c8c8" strokeWidth="4.5" />
            <path d="M372 379L379 391L393 369" fill="none" stroke="#c8c8c8" strokeWidth="4.5" />
            <text x="439" y="386" fontFamily="Liberation Serif" fontStyle="italic" fontSize="30" fill="#707070">fx</text>
          </Ico>
        </FxBox>
        <FormulaInput>
          2
          <PlainSvg width="18" height="12" viewBox="0 0 18 12">
            <path d="M1 1L9 9L17 1" fill="none" stroke="#707070" strokeWidth="4" />
          </PlainSvg>
        </FormulaInput>
      </FormulaBand>

      <SheetWrap>
        <Sheet>
          <Corner>
            <PlainSvg width="78" height="78" viewBox="0 0 78 78">
              <polygon points="78,0 78,78 0,78" fill="#b5b5b5" />
            </PlainSvg>
          </Corner>
          <ColHead $on>A</ColHead>
          <ColHead>B</ColHead>
          <ColHead>C</ColHead>
          <ColHead $wide>D</ColHead>
          {rows.map((r, i) => (
            <React.Fragment key={r[0]}>
              <RowHead $on={i === 1}>{i + 2}</RowHead>
              <Cell $num>{r[0]}{i === 1 && <Selection><Handle /></Selection>}</Cell>
              <Cell><Rich text={r[1]} /></Cell>
              <Cell><Rich text={r[2]} /></Cell>
              <Cell $end><Rich text={r[3]} /></Cell>
            </React.Fragment>
          ))}
        </Sheet>
        <ScrollBar>
          <ScrollBtn>
            <PlainSvg width="18" height="9" viewBox="0 0 18 9">
              <polygon points="0,9 18,9 9,0" fill="#808080" />
            </PlainSvg>
          </ScrollBtn>
          <Track><Thumb /></Track>
        </ScrollBar>
        <Watermark>https://blog.csdn.net</Watermark>
      </SheetWrap>
    </Page>
  );
}
